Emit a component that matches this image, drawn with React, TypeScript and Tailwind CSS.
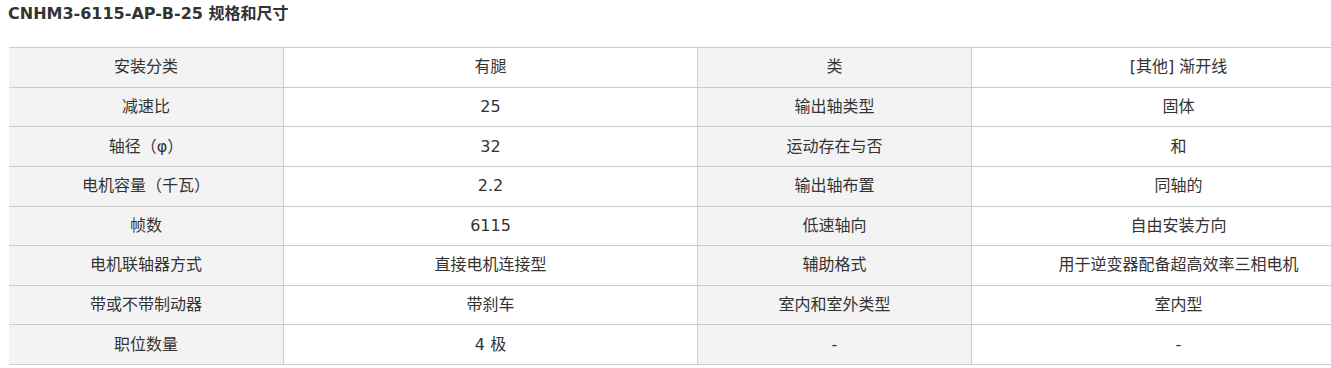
const rows: [string, string, string, string][] = [
  ['安装分类', '有腿', '类', '[其他] 渐开线'],
  ['减速比', '25', '输出轴类型', '固体'],
  ['轴径（φ）', '32', '运动存在与否', '和'],
  ['电机容量（千瓦）', '2.2', '输出轴布置', '同轴的'],
  ['帧数', '6115', '低速轴向', '自由安装方向'],
  ['电机联轴器方式', '直接电机连接型', '辅助格式', '用于逆变器配备超高效率三相电机'],
  ['带或不带制动器', '带刹车', '室内和室外类型', '室内型'],
  ['职位数量', '4 极', '-', '-'],
];

export default function App() {
  return (
    <div
      className="w-[1331px] h-[368px] overflow-hidden bg-white text-[#333333]"
      style={{ fontFamily: '"DejaVu Sans", "Noto Sans CJK SC", sans-serif' }}
    >
      <h2 className="pl-[8px] mt-[4px] text-[16px] leading-[20px] font-bold">CNHM3-6115-AP-B-25 规格和尺寸</h2>

      <div className="ml-[9px] mt-[23px] w-[1376px] border-b border-[#cccccc] text-[16px]">
        {rows.map((r, i) => (
          <div key={i} className="flex h-[39.625px] border-t border-[#cccccc]">
            <div className="w-[274px] flex items-center justify-center bg-[#f3f3f3]">{r[0]}</div>
            <div className="w-[414px] flex items-center justify-center border-l border-[#cccccc]">{r[1]}</div>
            <div className="w-[274px] flex items-center justify-center border-l border-[#cccccc] bg-[#f3f3f3]">{r[2]}</div>
            <div className="w-[414px] flex items-center justify-center border-l border-[#cccccc]">{r[3]}</div>
          </div>
        ))}
      </div>
    </div>
  );
}
